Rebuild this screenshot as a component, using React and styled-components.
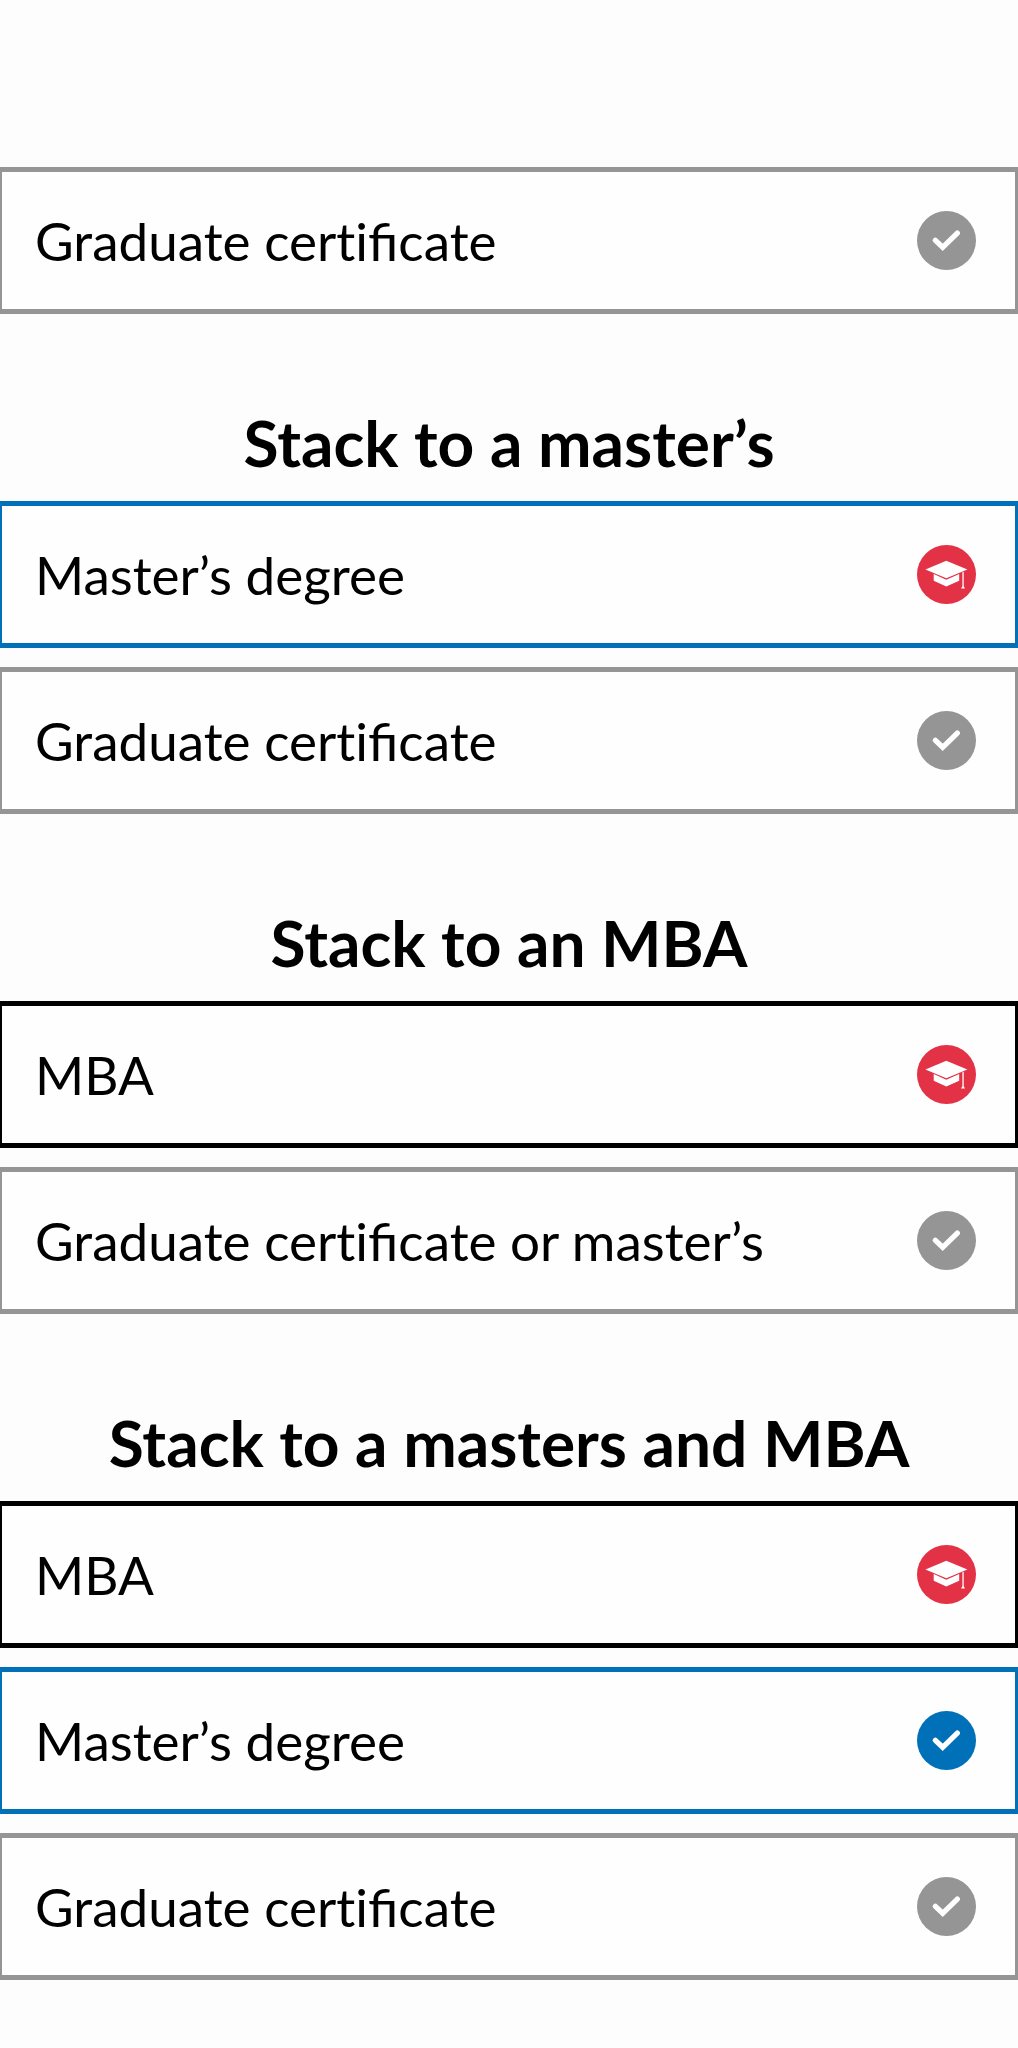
import React from 'react';
import styled, { createGlobalStyle } from 'styled-components';

const colors = {
  gray: '#959595',
  blue: '#0070b8',
  black: '#000000',
  red: '#e33146'
};

const GlobalStyle = createGlobalStyle`
  * {
    box-sizing: border-box;
  }

  body {
    margin: 0;
    background-color: #fdfdfd;
    color: #000000;
    font-family: Lato, 'Open Sans', sans-serif;
  }
`;

const Page = styled.main`
  display: flex;
  flex-direction: column;
  padding: 88px 0 68px;
`;

const Section = styled.section`
  padding-top: 79px;
`;

const Title = styled.h2`
  margin: 0;
  padding: 10px 24px 18px;
  font-size: 64px;
  font-weight: 700;
  line-height: 80px;
  text-align: center;
`;

const List = styled.ul`
  display: flex;
  flex-direction: column;
  gap: 19px;
  margin: 0;
  padding: 0;
  list-style: none;
`;

const Item = styled.li`
  display: flex;
  align-items: center;
  justify-content: space-between;
  gap: 24px;
  min-height: 147px;
  padding: 0 39px 0 33px;
  border: solid ${(props) => props.$color};
  border-width: 5px 3px 5px 2px;
  background-color: #fefefe;
`;

const Label = styled.span`
  font-size: 53px;
  line-height: 64px;
`;

/* keeps the "ti" pair apart, "fi" still joins */
const Plain = styled.span`
  font-variant-ligatures: none;
`;

const Icon = styled.svg`
  flex: none;
  width: 59px;
  height: 59px;
`;

const certificate = (
  <>
    <Plain>Graduate cert</Plain>ificate
  </>
);

const stacks = [
  {
    title: '',
    items: [{ label: certificate, color: colors.gray }]
  },
  {
    title: 'Stack to a master’s',
    items: [
      { label: 'Master’s degree', color: colors.blue, degree: true },
      { label: certificate, color: colors.gray }
    ]
  },
  {
    title: 'Stack to an MBA',
    items: [
      { label: 'MBA', color: colors.black, degree: true },
      { label: <>{certificate} or master’s</>, color: colors.gray }
    ]
  },
  {
    title: 'Stack to a masters and MBA',
    items: [
      { label: 'MBA', color: colors.black, degree: true },
      { label: 'Master’s degree', color: colors.blue },
      { label: certificate, color: colors.gray }
    ]
  }
];

function CheckIcon({ color }) {
  return (
    <Icon viewBox="0 0 59 59" aria-hidden="true">
      <circle cx="29.5" cy="29.5" r="29.5" fill={color} />
      <path
        d="M18.4 29.4 L25.7 36.3 L40.3 22.1"
        fill="none"
        stroke="#ffffff"
        strokeWidth="5.3"
        strokeLinecap="round"
      />
    </Icon>
  );
}

function CapIcon() {
  return (
    <Icon viewBox="0 0 59 59" aria-hidden="true">
      <circle cx="29.5" cy="29.5" r="29.5" fill={colors.red} />
      <g fill="#ffffff">
        <path d="M8.4 24.4 L29.3 15.8 L50.4 24.4 L29.3 33.2 Z" />
        <path d="M16.7 29.1 L29.3 34.8 L42.2 29.1 V35.8 L29.3 41.4 L16.7 35.8 Z" />
        <path d="M45.4 27.2 L46.7 26.7 V41.2 L48 43.6 H44 L45.4 41.2 Z" />
      </g>
    </Icon>
  );
}

function App() {
  return (
    <>
      <GlobalStyle />
      <Page>
        {stacks.map((stack, index) => (
          <Section key={index}>
            {stack.title && <Title>{stack.title}</Title>}
            <List>
              {stack.items.map((item, i) => (
                <Item key={i} $color={item.color}>
                  <Label>{item.label}</Label>
                  {item.degree ? <CapIcon /> : <CheckIcon color={item.color} />}
                </Item>
              ))}
            </List>
          </Section>
        ))}
      </Page>
    </>
  );
}

export default App;
